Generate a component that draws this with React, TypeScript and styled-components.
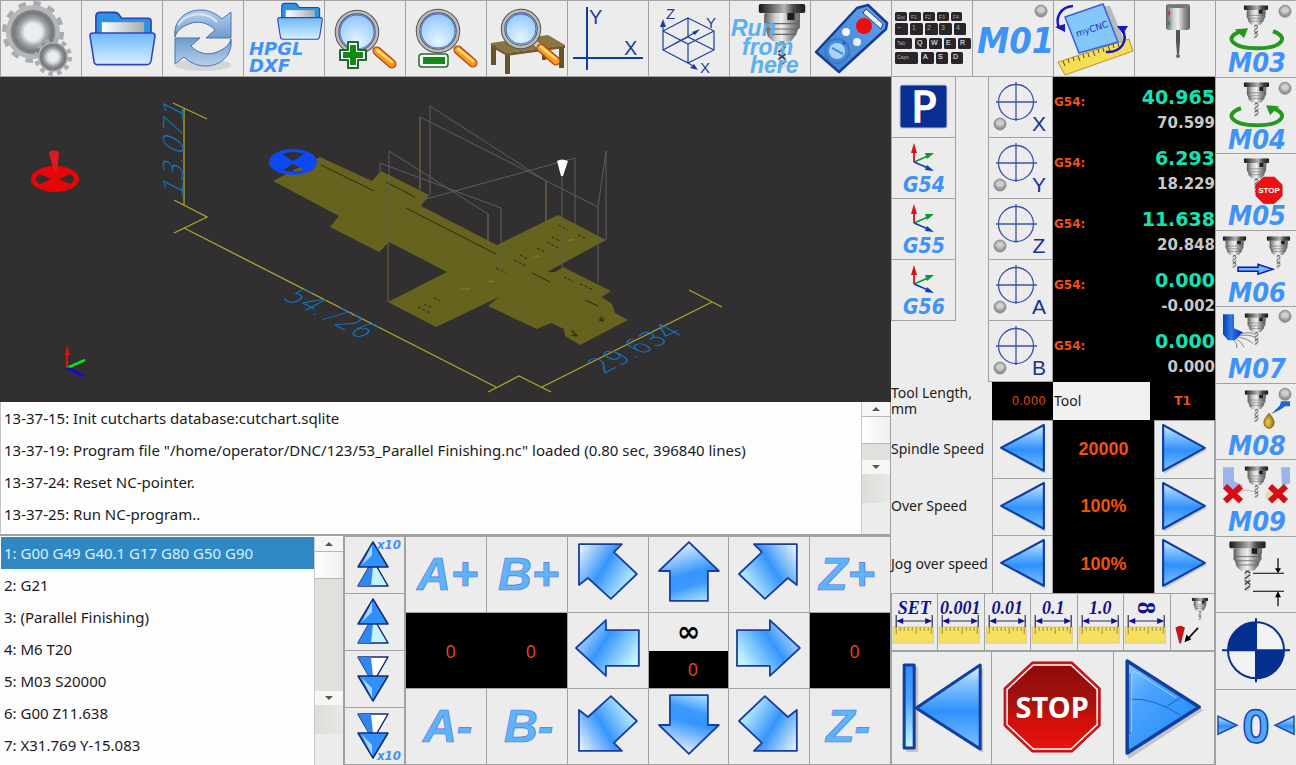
import React from "react";
import styled, { createGlobalStyle, css } from "styled-components";

const sans = '"Noto Sans", "Liberation Sans", sans-serif';
const dejavu = '"DejaVu Sans", Verdana, sans-serif';
const condensed = '"DejaVu Sans Condensed", "DejaVu Sans", sans-serif';
const liberation = '"Liberation Sans", Arial, sans-serif';
const serif = '"Liberation Serif", "Times New Roman", serif';

const color = {
  face: "#ececec",
  line: "#a2a2a2",
  view: "#312f30",
  orange: "#f4510b",
  dimOrange: "#d9480c",
  teal: "#14e2b2",
  silver: "#c8c8c8",
  navy: "#17338f",
  label: "#3f92f8",
};

const GlobalStyle = createGlobalStyle`
  * { box-sizing: border-box; }
  body { margin: 0; background: ${color.face}; font-family: ${sans}; color: #1b1b1b; }
  button { font: inherit; }
`;

/* ---------- layout ---------- */

const Screen = styled.div`
  display: grid;
  grid-template-columns: minmax(0, 15fr) minmax(0, 1fr);
  grid-template-rows: minmax(0, 1fr);
  height: 100vh;
  min-height: 700px;
  overflow: hidden;
`;

const Main = styled.main`
  display: grid;
  grid-template-rows: minmax(0, 77fr) minmax(0, 688fr);
`;

const Toolbar = styled.nav`
  display: grid;
  grid-template-columns: repeat(15, minmax(0, 1fr));
  grid-template-rows: minmax(0, 1fr);
  gap: 1px;
  padding: 1px 0 1px 1px;
  background: ${color.line};
`;

const MCodes = styled.nav`
  display: grid;
  grid-template-rows: repeat(10, minmax(0, 1fr));
  gap: 1px;
  padding: 1px 0 0 1px;
  background: ${color.line};
`;

const Body = styled.div`
  display: grid;
  grid-template-columns: minmax(0, 11fr) minmax(0, 4fr);
  grid-template-rows: minmax(0, 1fr);
`;

const Left = styled.div`
  display: grid;
  grid-template-rows: minmax(0, 325fr) minmax(0, 134fr) minmax(0, 229fr);
`;

const Right = styled.div`
  display: grid;
  grid-template-rows: minmax(0, 305fr) minmax(0, 38fr) minmax(0, 173fr) minmax(0, 58fr) minmax(0, 114fr);
`;

const Key = styled.button`
  display: block;
  min-width: 0;
  min-height: 0;
  padding: 0;
  border: 0;
  background: ${color.face};
  cursor: pointer;
`;

const Drawing = styled.svg`
  display: block;
  width: 100%;
  height: 100%;
`;

/* ---------- log and program ---------- */

const LogPanel = styled.section`
  display: flex;
  border: 1px solid ${color.line};
  border-top: 0;
  border-left-color: #c4c4c4;
  border-bottom-width: 2px;
  background: #fdfdfd;
  overflow: hidden;
`;

const Lines = styled.ul`
  flex: 1;
  min-width: 0;
  margin: 0;
  padding: 0;
  list-style: none;
  overflow: hidden;
`;

const Line = styled.li<{ $current?: boolean }>`
  height: 32px;
  padding-left: 3px;
  font-size: 15px;
  line-height: 32px;
  white-space: nowrap;
  ${(p) =>
    p.$current &&
    css`
      background: #3088c2;
      color: #d3f1ff;
    `}
`;

const Bar = styled.div`
  display: flex;
  flex-direction: column;
  width: 29px;
  border-left: 1px solid #c9c9c9;
  background: ${color.face};
`;

const BarArrow = styled.button<{ $down?: boolean }>`
  flex: none;
  height: 14px;
  padding: 0 0 0 10px;
  border: 0;
  background: #f7f6f5;
  &::before {
    content: "";
    display: block;
    width: 0;
    border: 4px solid transparent;
    ${(p) => (p.$down ? "border-top: 4px solid #555; border-bottom: 0;" : "border-bottom: 4px solid #555; border-top: 0;")}
  }
`;

const Thumb = styled.div`
  flex: none;
  height: 28px;
  border: solid #b9b7b4;
  border-width: 1px 0;
  background: linear-gradient(90deg, #fefefe, #f1efed);
`;

const Track = styled.div`
  flex: 1;
  background: #e0e0dd;
`;

const BarFoot = styled.div`
  flex: none;
  height: 29px;
  margin-bottom: 31px;
  background: linear-gradient(90deg, #dcdcd9, #e8e8e6);
`;

const Bottom = styled.div`
  display: grid;
  grid-template-columns: minmax(0, 344fr) minmax(0, 61fr) minmax(0, 486fr);
  grid-template-rows: minmax(0, 1fr);
`;

const Program = styled.section`
  display: flex;
  min-height: 0;
  padding: 1px 0 0 1px;
  background: #fdfdfd;
  border-right: 1px solid ${color.line};
  overflow: hidden;
`;

const Pager = styled.div`
  display: grid;
  grid-template-rows: repeat(4, minmax(0, 1fr));
  gap: 1px;
  padding: 1px;
  background: ${color.line};
`;

/* ---------- jog pad ---------- */

const JogPad = styled.div`
  display: grid;
  grid-template-columns: repeat(6, minmax(0, 1fr));
  grid-template-rows: repeat(3, minmax(0, 1fr));
  gap: 1px;
  padding: 1px;
  background: ${color.line};
`;

const JogReadout = styled.output<{ $span?: number }>`
  display: grid;
  grid-template-columns: repeat(${(p) => p.$span ?? 1}, 1fr);
  grid-column: span ${(p) => p.$span ?? 1};
  align-items: center;
  background: #000;
  color: ${color.dimOrange};
  font-family: ${sans};
  font-size: 18px;
  line-height: 24px;
  text-align: center;
  span {
    padding-left: 9px;
  }
`;

const JogStep = styled.div`
  display: grid;
  grid-template-rows: repeat(2, minmax(0, 1fr));
`;

const StepValue = styled.div`
  display: grid;
  place-items: center;
  background: ${color.face};
  color: #000;
  font-family: ${dejavu};
  font-size: 28px;
  font-weight: 700;
  line-height: 36px;
`;

/* ---------- axes ---------- */

const Axes = styled.section`
  display: grid;
  grid-template-columns: minmax(0, 65fr) minmax(0, 32fr) minmax(0, 65fr) minmax(0, 162fr);
  grid-template-rows: minmax(0, 1fr);
`;

const KeyColumn = styled.div`
  display: grid;
  grid-template-rows: repeat(5, minmax(0, 1fr));
`;

const FramedKey = styled(Key)`
  border: 1px solid ${color.line};
  border-top-width: 0;
`;

const Readouts = styled.div`
  display: grid;
  grid-template-rows: repeat(5, minmax(0, 1fr));
  background: #000;
`;

const AxisRow = styled.div`
  display: flex;
  justify-content: space-between;
  align-items: flex-start;
  padding-left: 1px;
`;

const Offset = styled.span`
  padding-top: 13px;
  color: ${color.orange};
  font-family: ${dejavu};
  font-size: 12px;
  font-weight: 700;
  line-height: 24px;
`;

const Values = styled.output`
  display: grid;
  padding-top: 8px;
  font-family: ${dejavu};
  font-weight: 700;
  text-align: right;
`;

const Work = styled.span`
  color: ${color.teal};
  font-size: 19px;
  line-height: 24px;
`;

const Machine = styled.span`
  color: ${color.silver};
  font-size: 15px;
  line-height: 28px;
`;

/* ---------- tool and speeds ---------- */

const ToolRow = styled.section`
  display: grid;
  grid-template-columns: minmax(0, 101fr) minmax(0, 61fr) minmax(0, 97fr) minmax(0, 65fr);
  grid-template-rows: minmax(0, 1fr);
`;

const Caption = styled.span`
  display: flex;
  align-items: center;
  font-family: ${sans};
  font-size: 14px;
  line-height: 16px;
`;

const ToolCaption = styled(Caption)`
  padding-left: 1px;
  background: #f1f1f1;
`;

const Small = styled.output<{ $bold?: boolean }>`
  display: flex;
  align-items: center;
  justify-content: ${(p) => (p.$bold ? "center" : "flex-end")};
  padding-right: ${(p) => (p.$bold ? 0 : 7)}px;
  background: #000;
  color: ${(p) => (p.$bold ? color.orange : color.dimOrange)};
  font-family: ${dejavu};
  font-size: 12px;
  font-weight: ${(p) => (p.$bold ? 700 : 400)};
  line-height: 16px;
`;

const Speeds = styled.section`
  display: grid;
  grid-template-rows: repeat(3, minmax(0, 1fr));
`;

const SpeedRow = styled.div`
  display: grid;
  grid-template-columns: minmax(0, 101fr) minmax(0, 61fr) minmax(0, 101fr) minmax(0, 61fr);
  grid-template-rows: minmax(0, 1fr);
`;

const SpeedKey = styled(Key)`
  border: 1px solid ${color.line};
  border-bottom-width: 0;
`;

const SpeedValue = styled.output`
  display: grid;
  place-items: center;
  background: #000;
  color: ${color.orange};
  font-family: ${liberation};
  font-size: 18px;
  font-weight: 700;
  line-height: 24px;
`;

const Steps = styled.section`
  display: grid;
  grid-template-columns: repeat(6, minmax(0, 46fr)) minmax(0, 44fr);
  grid-template-rows: minmax(0, 1fr);
  gap: 1px;
  padding: 1px;
  background: ${color.line};
`;

const Run = styled.section`
  display: grid;
  grid-template-columns: minmax(0, 100fr) minmax(0, 121fr) minmax(0, 101fr);
  grid-template-rows: minmax(0, 1fr);
  gap: 1px;
  padding: 1px;
  background: ${color.line};
`;

/* ---------- shared drawings ---------- */

const SharedDefs = styled.svg`
  position: absolute;
  width: 0;
  height: 0;
`;

function Defs() {
  return (
    <SharedDefs aria-hidden="true">
      <defs>
        <linearGradient id="metal" x1="0" x2="1" y1="0" y2="0">
          <stop offset="0" stopColor="#5b5b5b" />
          <stop offset=".3" stopColor="#cfcfcf" />
          <stop offset=".5" stopColor="#efefef" />
          <stop offset=".75" stopColor="#979797" />
          <stop offset="1" stopColor="#5e5e5e" />
        </linearGradient>
        <linearGradient id="darkMetal" x1="0" x2="1" y1="0" y2="0">
          <stop offset="0" stopColor="#161616" />
          <stop offset=".3" stopColor="#6d6d6d" />
          <stop offset=".55" stopColor="#b5b5b5" />
          <stop offset=".75" stopColor="#4a4a4a" />
          <stop offset="1" stopColor="#1c1c1c" />
        </linearGradient>
        <linearGradient id="arrow" x1="0" x2="1" y1="0" y2=".6">
          <stop offset="0" stopColor="#f3faff" />
          <stop offset=".5" stopColor="#3695fb" />
          <stop offset="1" stopColor="#c3f4ff" />
        </linearGradient>
        <linearGradient id="upArrow" x1=".3" x2=".6" y1="0" y2="1">
          <stop offset="0" stopColor="#f3faff" />
          <stop offset=".55" stopColor="#3695fb" />
          <stop offset=".75" stopColor="#3d9afc" />
          <stop offset="1" stopColor="#9fd8ff" />
        </linearGradient>
        <linearGradient id="tri" x1="0" x2="0" y1="0" y2="1">
          <stop offset="0" stopColor="#e4f4ff" />
          <stop offset=".2" stopColor="#8cc8ff" />
          <stop offset=".55" stopColor="#2f90fc" />
          <stop offset="1" stopColor="#7cc2ff" />
        </linearGradient>
        <linearGradient id="play" x1="0" x2="1" y1="0" y2="1">
          <stop offset="0" stopColor="#8fcbff" />
          <stop offset=".3" stopColor="#4ba4fd" />
          <stop offset=".7" stopColor="#3192fb" />
          <stop offset="1" stopColor="#8fd0ff" />
        </linearGradient>
        <linearGradient id="bar" x1="0" x2="0" y1="0" y2="1">
          <stop offset="0" stopColor="#2f90fc" />
          <stop offset=".4" stopColor="#4aa2fc" />
          <stop offset="1" stopColor="#c9f6ff" />
        </linearGradient>
        <linearGradient id="folder" x1="0" x2="0" y1="0" y2="1">
          <stop offset="0" stopColor="#6db9fa" />
          <stop offset="1" stopColor="#d8efff" />
        </linearGradient>
        <linearGradient id="paper" x1="0" x2="1" y1="0" y2="0">
          <stop offset="0" stopColor="#fff" />
          <stop offset="1" stopColor="#a9acb0" />
        </linearGradient>
        <linearGradient id="steel" x1="0" x2="0" y1="0" y2="1">
          <stop offset="0" stopColor="#b8d0ea" />
          <stop offset="1" stopColor="#6f9bcf" />
        </linearGradient>
        <linearGradient id="stopRed" x1="0" x2="0" y1="0" y2="1">
          <stop offset="0" stopColor="#8f0a08" />
          <stop offset=".5" stopColor="#a81410" />
          <stop offset=".6" stopColor="#c90f0b" />
          <stop offset="1" stopColor="#ec120d" />
        </linearGradient>
        <linearGradient id="remote" x1="0" x2="1" y1="1" y2="0">
          <stop offset="0" stopColor="#3f7fd2" />
          <stop offset="1" stopColor="#5fa2ea" />
        </linearGradient>
        <linearGradient id="jet" x1="0" x2="1" y1="0" y2="0">
          <stop offset="0" stopColor="#0a3fb0" />
          <stop offset=".4" stopColor="#2f7be0" />
          <stop offset="1" stopColor="#0b1ec8" />
        </linearGradient>
        <radialGradient id="lens" cx=".5" cy=".75" r=".8">
          <stop offset="0" stopColor="#e6f4ff" />
          <stop offset=".5" stopColor="#b4dafe" />
          <stop offset="1" stopColor="#7fbdf8" />
        </radialGradient>
        <radialGradient id="led" cx=".5" cy=".4" r=".6">
          <stop offset="0" stopColor="#d6d6d6" />
          <stop offset=".6" stopColor="#a9a9a9" />
          <stop offset="1" stopColor="#7d7d7d" />
        </radialGradient>
        <radialGradient id="gearFace" cx=".5" cy=".5" r=".5">
          <stop offset=".45" stopColor="#d5d8da" />
          <stop offset=".6" stopColor="#a4a8ac" />
          <stop offset=".85" stopColor="#757a7f" />
          <stop offset="1" stopColor="#83878b" />
        </radialGradient>
        <radialGradient id="drop" cx=".4" cy=".6" r=".6">
          <stop offset="0" stopColor="#f2d35a" />
          <stop offset="1" stopColor="#8f6c0c" />
        </radialGradient>
        <symbol id="spindle" viewBox="0 0 28 36">
          <path d="M12 20h4v15l-2 1-2-1z" fill="#d4d4d4" />
          <path d="M12 23l4-3M12 27l4-3M12 31l4-3M12 35l4-3M12 20l4 3M12 28l4 3" stroke="#3d3d3d" strokeWidth=".9" />
          <path d="M5 14h18l-1 3-3 4H9l-3-3z" fill="url(#metal)" />
          <rect x="4" y="5" width="20" height="9" rx="1" fill="url(#metal)" />
          <path d="M5 11h18M5 14h18M7 17h15" stroke="#666" strokeWidth=".6" />
          <rect x="1" y="0" width="26" height="5" rx="1" fill="url(#darkMetal)" />
          <rect x="17" y="5" width="7" height="4" fill="#1d1d1d" />
          <rect x="21" y="5" width="3" height="4" fill="#777" />
        </symbol>
        <symbol id="folderIcon" viewBox="0 0 68 56">
          <path d="M7 26V6q0-4 4-4h15q3 0 5 3l2 3h27q3 0 3 3v15z" fill="#2b92dd" stroke="#2b3fb8" strokeWidth="1.6" />
          <rect x="13" y="12" width="43" height="16" fill="url(#paper)" />
          <path d="M1 26q0-3 3-3h60q3 0 3 3l-4 25q-1 4-4 4H9q-4 0-4-4z" fill="url(#folder)" stroke="#2f45c4" strokeWidth="1.6" />
        </symbol>
      </defs>
    </SharedDefs>
  );
}

const Led = ({ x, y }: { x: number; y: number }) => (
  <g>
    <circle cx={x} cy={y} r="6" fill="url(#led)" stroke="#8f8f8f" />
    <ellipse cx={x} cy={y - 1} rx="3.6" ry="2.8" fill="#cfcfcf" />
  </g>
);

const Spindle = ({ x, y, w }: { x: number; y: number; w: number }) => (
  <use href="#spindle" x={x} y={y} width={w} height={(w * 36) / 28} />
);

const Lens = ({ x, y, r }: { x: number; y: number; r: number }) => (
  <g>
    <path d={`M${x + 14} ${y + 14}l6 5`} stroke="#c9c9c9" strokeWidth="5" />
    <path d={`M${x + 20} ${y + 19}l15 13`} stroke="#c43a10" strokeWidth="9" strokeLinecap="round" />
    <path d={`M${x + 20} ${y + 19}l15 13`} stroke="#f79a1e" strokeWidth="6.5" strokeLinecap="round" />
    <path d={`M${x + 20} ${y + 18}l15 12`} stroke="#ffe36c" strokeWidth="2.5" strokeLinecap="round" />
    <circle cx={x} cy={y} r={r} fill="url(#lens)" stroke="#555" strokeWidth="4.5" />
    <circle cx={x} cy={y} r={r} fill="none" stroke="#bcbcbc" strokeWidth="2.5" />
    <circle cx={x} cy={y} r={r - 3} fill="none" stroke="#4a67c8" strokeWidth="1" />
  </g>
);

const Gear = ({ x, y, r, teeth }: { x: number; y: number; r: number; teeth: number }) => {
  const unit = (2 * Math.PI * (r - 3)) / (teeth * 2);
  return (
    <g>
      <circle cx={x} cy={y} r={r - 3} fill="none" stroke="#a9abad" strokeWidth="6" strokeDasharray={`${unit} ${unit}`} />
      <circle cx={x} cy={y} r={r - 4} fill="#b4b6b8" />
      <circle cx={x} cy={y} r={r * 0.72} fill="url(#gearFace)" />
      <circle cx={x} cy={y} r={r * 0.34} fill="#ececec" stroke="#cfd2d4" strokeWidth="2" />
    </g>
  );
};

const Cross = ({ x, y }: { x: number; y: number }) => (
  <path d={`M${x - 8} ${y - 7}L${x + 8} ${y + 8}M${x + 8} ${y - 7}L${x - 8} ${y + 8}`} stroke="#d40d17" strokeWidth="6" />
);

const octagon = (cx: number, cy: number, rx: number, ry: number) => {
  const k = 0.42;
  return [
    [-k, -1], [k, -1], [1, -k], [1, k], [k, 1], [-k, 1], [-1, k], [-1, -k],
  ]
    .map(([a, b]) => `${cx + a * rx},${cy + b * ry}`)
    .join(" ");
};

const CodeText = ({ children, x = 12, y = 71, size = 27 }: { children: string; x?: number; y?: number; size?: number }) => (
  <text x={x} y={y} fill={color.label} fontFamily={condensed} fontSize={size} fontWeight="700" fontStyle="italic">
    {children}
  </text>
);

/* ---------- toolbar ---------- */

const keyRows: { y: number; h: number; keys: [number, number, string][] }[] = [
  { y: 11, h: 9, keys: [[3, 12, "Esc"], [17, 12, "F1"], [31, 12, "F2"], [45, 12, "F3"], [59, 11, "F4"]] },
  { y: 22, h: 12, keys: [[3, 13, "~"], [18, 13, "1"], [33, 13, "2"], [47, 13, "3"], [62, 12, "4"]] },
  { y: 37, h: 11, keys: [[3, 17, "Tab"], [23, 12, "Q"], [37, 13, "W"], [52, 12, "E"], [66, 13, "R"]] },
  { y: 51, h: 12, keys: [[3, 23, "Caps"], [29, 13, "A"], [44, 12, "S"], [59, 12, "D"]] },
];

const runText = { fill: "#59b0f2", fontFamily: liberation, fontSize: 23, fontWeight: 700, fontStyle: "italic" } as const;
const axisText = { fill: "#1d3f9c", fontFamily: liberation, fontSize: 20 } as const;

const tools: [string, React.ReactNode][] = [
  ["Settings", <><Gear x={32} y={31} r={31} teeth={12} /><Gear x={52} y={56} r={19} teeth={12} /></>],
  ["Open file", <use href="#folderIcon" x="7" y="9" width="67" height="56" />],
  ["Reload", <>
    <ellipse cx="40" cy="64" rx="28" ry="6" fill="#d3d5d8" />
    <path d="M12 36C10 20 22 9 38 9C46 9 54 13 59 18L68 11V37H43L52 29C46 22 35 19 26 23C18 26 14 30 12 36Z" fill="url(#steel)" stroke="#4a74ac" />
    <path d="M12 36C10 20 22 9 38 9C46 9 54 13 59 18L68 11V37H43L52 29C46 22 35 19 26 23C18 26 14 30 12 36Z" fill="url(#steel)" stroke="#4a74ac" transform="rotate(180 40 37)" />
    <path d="M15 24C23 12 42 9 54 21" fill="none" stroke="#dbe8f6" strokeWidth="2" />
  </>],
  ["Open HPGL or DXF", <>
    <use href="#folderIcon" x="33" y="1" width="46" height="38" />
    <g fill={color.label} fontFamily={dejavu} fontSize="18" fontWeight="700" fontStyle="italic">
      <text x="5" y="54">HPGL</text><text x="5" y="71">DXF</text>
    </g>
  </>],
  ["Zoom in", <>
    <Lens x={32} y={31} r={20} />
    <path d="M23 41h10v8h8v10h-8v8H23v-8h-8V49h8z" fill="#fff" stroke="#1d6b2a" strokeWidth="2" strokeLinejoin="round" />
    <path d="M25 44h6v7h7v6h-7v7h-6v-7h-7v-6h7z" fill="#128a14" />
  </>],
  ["Zoom out", <>
    <Lens x={32} y={30} r={20} />
    <rect x="13" y="53" width="29" height="13" rx="3" fill="#fff" stroke="#1d6b2a" strokeWidth="1.5" />
    <rect x="17" y="56" width="22" height="7" fill="#128a14" />
  </>],
  ["Zoom to table", <>
    <path d="M55 40h4v19h-4zM4 44h5v20H4zM72 46h5v21h-5zM18 52h5v21h-5z" fill="#645329" />
    <path d="M4 42l57-8 17 10-58 8z" fill="#8a7540" /><path d="M4 42l16 10 58-8v3l-58 8-16-9z" fill="#6f5c30" />
    <Lens x={34} y={28} r={18} />
  </>],
  ["Top view", <>
    <path d="M19 6V69M5 57H75" stroke="#0d3fa3" strokeWidth="2" />
    <text {...axisText} x="21" y="23">Y</text><text {...axisText} x="56" y="54">X</text>
  </>],
  ["3D view", <>
    <path d="M39 17L65 30V49L39 62L14 49V30ZM14 30L39 43L65 30M14 49L39 36L65 49M39 17V36M39 43V62M14 49L47 31M14 30V22M39 62L46 66" fill="none" stroke="#1d3f9c" strokeWidth="1.2" />
    <path d="M11 26l3-8 3 8zM43 31l8-3-5 6zM49 69l-8-2 4-4z" fill="#1d3f9c" />
    <g fill="#1d3f9c" fontFamily={liberation} fontSize="15"><text x="17" y="18">Z</text><text x="57" y="27">Y</text><text x="51" y="72">X</text></g>
  </>],
  ["Run from here", <>
    <Spindle x={27} y={3} w={50} />
    <text {...runText} x="1" y="35">Run</text><text {...runText} x="12" y="54">from</text><text {...runText} x="20" y="72">here</text>
  </>],
  ["Remote control", <>
    <path d="M5 51L46 7L57 4L76 22L75 28L28 71Z" fill="url(#remote)" stroke="#163d94" strokeWidth="2.5" strokeLinejoin="round" />
    <path d="M55 8L72 23L70 28L52 12Z" fill="#f2f2f2" stroke="#163d94" />
    <circle cx="53" cy="25" r="8" fill="#f30b0b" /><circle cx="35" cy="31" r="4" fill="#f3f8ff" /><circle cx="46" cy="41" r="4" fill="#e3efff" />
    <circle cx="26" cy="50" r="12" fill="none" stroke="#3b79cb" strokeWidth="2" />
    <circle cx="26" cy="50" r="8" fill="#a8d4fb" /><path d="M21 47l11 6" stroke="#4b8ad8" strokeWidth="2" /><circle cx="33" cy="42" r="1.5" fill="#1b56b0" />
  </>],
  ["Keyboard", <>
    {keyRows.map((row) => row.keys.map(([x, w, t]) => (
      <g key={t}>
        <rect x={x} y={row.y} width={w} height={row.h} rx="1.5" fill="#29252a" />
        <text x={x + 2} y={row.y + 7} fill={t.length === 1 && t > "@" && t < "Z" ? "#fff" : "#a9a9a9"} fontFamily={liberation} fontSize={t.length === 1 ? 7 : 5}>{t}</text>
      </g>
    )))}
  </>],
  ["M01", <><CodeText x={4} y={52} size={36}>M01</CodeText><Led x={68} y={10} /></>],
  ["Rotate coordinates", <>
    <path d="M50 5l6 0 14 34-6 3z" fill="#b9b9b9" />
    <path d="M4 61L75 38L79 50L11 74Z" fill="#f6dc57" stroke="#b8962a" />
    <path d="M9 60l2 5M14 58l1 4M19 56l1 4M24 55l2 5M29 53l1 4M34 52l1 4M39 50l2 5M44 48l1 4M49 47l1 4M54 45l2 5M59 43l1 4M64 42l1 4" stroke="#5a4a10" />
    <path d="M11 16L49 3L64 41L25 52Z" fill="#84c8fb" stroke="#3b5de6" strokeWidth="1.5" />
    <text x="23" y="36" transform="rotate(-18 23 36)" fill="#1a30b8" fontFamily={dejavu} fontSize="9">myCNC</text>
    <path d="M19 5C6 6 1 17 5 27M52 51C67 52 75 40 68 28" fill="none" stroke="#1416c8" strokeWidth="2.5" />
    <path d="M1 26l10 5 0-8zM63 25l11 0-5 8z" fill="#1416c8" />
  </>],
  ["Probe", <>
    <path d="M41 29h4v12l-1 12h-2l-1-12z" fill="#555" /><circle cx="43" cy="55" r="2" fill="#666" />
    <rect x="31" y="3" width="24" height="26" rx="3" fill="url(#metal)" /><ellipse cx="43" cy="5" rx="12" ry="2" fill="#777" />
    <path d="M32 12l3-3v6z" fill="#e22" /><path d="M32 22l3-2v5z" fill="#1a9a4a" />
  </>],
];

/* ---------- M codes ---------- */

const mcodes: [string, React.ReactNode][] = [
  ["M03", <>
    <path d="M25 30C7 36 16 47 41 47C66 47 74 36 57 30" fill="none" stroke="#23991d" strokeWidth="4" />
    <path d="M19 28l13-1-4 10z" fill="#23991d" /><Spindle x={27} y={4} w={26} /><Led x={69} y={10} /><CodeText>M03</CodeText>
  </>],
  ["M04", <>
    <path d="M25 30C7 36 16 47 41 47C66 47 74 36 57 30" fill="none" stroke="#23991d" strokeWidth="4" />
    <path d="M50 27l13 1-9 9z" fill="#23991d" /><Spindle x={27} y={4} w={27} /><Led x={69} y={10} /><CodeText>M04</CodeText>
  </>],
  ["M05", <>
    <Spindle x={27} y={4} w={27} /><polygon points={octagon(53, 36, 13, 13)} fill="#f00f14" stroke="#c40d10" />
    <text x="53" y="39" fill="#fff" fontFamily={liberation} fontSize="8" fontWeight="700" textAnchor="middle">STOP</text><CodeText>M05</CodeText>
  </>],
  ["M06", <>
    <Spindle x={6} y={5} w={25} /><Spindle x={50} y={5} w={25} />
    <path d="M22 36h20v-3l15 5-15 5v-3H22z" fill="#6db9fa" stroke="#0d14b8" strokeWidth="1.5" /><CodeText>M06</CodeText>
  </>],
  ["M07", <>
    <path d="M7 7h11v14l9 4-8 8H12l-5-6z" fill="url(#jet)" />
    <path d="M24 28q10-1 16 2M23 30q8 1 14 6M21 32q5 3 7 8M18 33q3 3 3 8M24 27q9-3 15 0" fill="none" stroke="#888" />
    <Spindle x={28} y={6} w={25} /><Led x={69} y={9} /><CodeText>M07</CodeText>
  </>],
  ["M08", <>
    <Spindle x={28} y={6} w={25} /><path d="M55 30l9-9 1-4h9v5h-5l-4 3z" fill="#1b66d8" />
    <path d="M53 29q6 7 5 10a5 5 0 0 1-10 0q-1-3 5-10z" fill="url(#drop)" stroke="#8f6c0c" /><Led x={69} y={10} /><CodeText>M08</CodeText>
  </>],
  ["M09", <>
    <path d="M7 7h11v14l9 4-8 8H12l-5-6zM65 7h9v16l-8 3z" fill="#9db4ea" /><circle cx="54" cy="36" r="5" fill="#e6d9ae" />
    <path d="M24 30q10-1 16 2" fill="none" stroke="#bbb" /><Spindle x={28} y={6} w={25} /><Cross x={17} y={33} /><Cross x={62} y={33} /><CodeText>M09</CodeText>
  </>],
  ["Measure tool", <>
    <Spindle x={12} y={4} w={39} />
    <path d="M37 36H68M37 54H68M62 21V34M62 56V69" stroke="#000" strokeWidth="1.2" /><path d="M59 31h6l-3 5zM59 60h6l-3-6z" />
  </>],
  ["Go to zero", <>
    <circle cx="40" cy="37" r="28" fill="#f2f2f2" stroke="#0a2f8f" strokeWidth="2" />
    <path d="M40 37V9A28 28 0 0 0 12 37ZM40 37V65A28 28 0 0 0 68 37Z" fill="#06308f" /><path d="M40 5V69M6 37H74" stroke="#06308f" strokeWidth="2" />
  </>],
  ["Set zero", <>
    <text x="40" y="53" fill="#4ea8ff" stroke="#1d3fa8" strokeWidth="1.5" fontFamily={sans} fontSize="47" fontWeight="700" textAnchor="middle">0</text>
    <path d="M2 26L21 35L2 44ZM78 26L59 35L78 44Z" fill="url(#tri)" stroke="#1d4fa8" strokeWidth="1.5" />
  </>],
];

/* ---------- 3D view ---------- */

const outline =
  "320,157 372,181 381,171 429,195 421,206 497,245 558,215 606,240 547,272 555,272 563,267 611,291 602,297 612,304 615,313 628,320 580,345 565,336 564,329 551,323 537,329 488,306 499,297 436,327 388,302 447,272 389,242 379,252 330,227 339,216 273,181";

const dimText = { fill: "#0f74c2", fontFamily: dejavu, fontWeight: 200 } as const;

function Viewer() {
  return (
    <Drawing viewBox="0 77 891 325" preserveAspectRatio="xMidYMid slice" role="img" aria-label="Tool path">
      <rect y="77" width="891" height="325" fill={color.view} />
      <polygon points={outline} fill="#66631f" />
      <g fill="none" stroke="#2c2a12" strokeWidth="1">
        <path d="M321 165L374 191M406 208L496 254M386 182L415 197M532 273L550 282M585 300L598 306" />
        <path d="M558 225l10 5M578 235l9 4M552 237l10 5M547 242l12 6M520 255l8 4M514 260l12 6M537 248l8 4M496 268l10 5M564 277l10 5M580 284l14 6M418 307l12 6M424 304l7 3M434 298l6 3" strokeDasharray="3 2" />
        <path d="M571 331l6 4m-6 0l7 1m-5-6l3 7M598 318l6 3m-6 1l7-4m-4-2l1 6" />
      </g>
      <path d="M533 258q5-3 8-1M568 241q4-2 7-1M460 289q8 1 10-1M488 282l6-1" fill="none" stroke="#7d781c" strokeWidth="1.500" />
      <g fill="none" stroke="#5e5c60">
        <path d="M420 206V117L598 207V283M430 195V106L546 181V221M389 242V151L488 214V245M380 171V163L501 208V272M426 199L575 158V224M598 207L606 151V240M562 176V267" />
        <path d="M388 242V302M488 214V245M546 181V221M420 188V117" stroke="#69672f" />
      </g>
      <g fill="none" stroke="#aaa92c" strokeWidth="1.3">
        <path d="M184 108V205M173 103L207 119M174 200L207 217L174 233M184 228L496 387M488 392L519 376L551 392M542 387L712 302M689 290L722 307" />
      </g>
      <text {...dimText} fontSize="27" transform="translate(183 200) rotate(-90) skewX(-27)">13.071</text>
      <text {...dimText} fontSize="26" transform="translate(281 298) rotate(27) skewX(-34)">54.726</text>
      <text {...dimText} fontSize="26" transform="translate(604 374) rotate(-27) skewX(34)">29.634</text>
      <ellipse cx="293" cy="162" rx="22" ry="11" fill="#0d49f2" stroke="#0d49f2" strokeWidth="4" />
      <path d="M293 161L282 154Q293 150 304 154ZM293 164L283 170Q293 173 303 170Z" fill={color.view} />
      <path d="M293 170l8-3 2 3q-6 2-10 1z" fill="#66631f" />
      <ellipse cx="55" cy="179" rx="22" ry="11" fill="#e80508" stroke="#e80508" strokeWidth="4" />
      <path d="M51 179L40 184Q32 179 40 174ZM59 179L70 184Q78 179 70 174Z" fill={color.view} />
      <path d="M49 153a5 2.500 0 0 1 10 0l-2 19h-3z" fill="#dd1a24" />
      <path d="M67 368V350" stroke="#e01010" strokeWidth="2" /><path d="M65 355l2-10 3 10z" fill="#e01010" />
      <path d="M67 368L85 360" stroke="#0ee01a" strokeWidth="2.500" /><path d="M67 368L84 376" stroke="#1208d8" strokeWidth="3" />
      <path d="M557 161q5-3 11 0l-5 15h-2z" fill="#fbfbfb" />
    </Drawing>
  );
}

/* ---------- parts ---------- */

const log = [
  "13-37-15: Init cutcharts database:cutchart.sqlite",
  '13-37-19: Program file "/home/operator/DNC/123/53_Parallel Finishing.nc" loaded (0.80 sec, 396840 lines)',
  "13-37-24: Reset NC-pointer.",
  "13-37-25: Run NC-program..",
];

const program = [
  "1: G00 G49 G40.1 G17 G80 G50 G90",
  "2: G21",
  "3: (Parallel Finishing)",
  "4: M6 T20",
  "5: M03 S20000",
  "6: G00 Z11.638",
  "7: X31.769 Y-15.083",
];

const axes = [
  ["X", "40.965", "70.599"],
  ["Y", "6.293", "18.229"],
  ["Z", "11.638", "20.848"],
  ["A", "0.000", "-0.002"],
  ["B", "0.000", "0.000"],
];

const speeds = [
  ["Spindle Speed", "20000"],
  ["Over Speed", "100%"],
  ["Jog over speed", "100%"],
];

function ScrollBar() {
  return (
    <Bar>
      <BarArrow aria-label="Scroll up" />
      <Thumb />
      <Track />
      <BarArrow $down aria-label="Scroll down" />
      <BarFoot />
    </Bar>
  );
}

function IconKey({ name, box = "0 0 80 75", children }: { name: string; box?: string; children: React.ReactNode }) {
  return (
    <Key aria-label={name}>
      <Drawing viewBox={box} fill="none">
        <g fill="#000">{children}</g>
      </Drawing>
    </Key>
  );
}

const diagonal = "M11 7H54L46 15L69 37L43 62L20 41L11 48Z";
const sideways = "M8 35L38 7V17H71V53H38V63Z";
const upward = "M40 5L70 34H59V64H21V34H10Z";

const JogArrow = ({ name, d, flip, fill = "url(#arrow)" }: { name: string; d: string; flip?: string; fill?: string }) => (
  <IconKey name={name}>
    <path d={d} transform={flip} fill={fill} stroke="#173f9b" strokeWidth="1.8" strokeLinejoin="round" />
  </IconKey>
);

const JogLetter = ({ children, x }: { children: string; x: number }) => (
  <IconKey name={`Jog ${children}`}>
    <text x={x} y="53" fill="#5cb4fb" stroke="#5c74d8" strokeWidth=".7" fontFamily={liberation} fontSize="47" fontWeight="700" fontStyle="italic">
      {children}
    </text>
  </IconKey>
);

const PageIcon = ({ name, down, fast }: { name: string; down?: boolean; fast?: boolean }) => (
  <IconKey name={name} box="0 0 59 56">
    <g stroke="#142c6b" strokeWidth="1.5" strokeLinejoin="round" transform={down ? "matrix(1 0 0 -1 0 55)" : undefined}>
      <path d="M28 23L43 49H13Z" fill={down ? "#fff" : "#c3f3ff"} />
      <path d="M13 49L28 23L28 30L26 49Z" fill="#2f88f2" stroke="none" />
      <path d="M28 5L43 30H13Z" fill="#3190fb" />
      <path d="M27 8L27 18L17 28Z" fill="#a9d5ff" stroke="none" />
    </g>
    {fast && (
      <text x="32" y={down ? 52 : 12} fill={color.label} fontFamily={condensed} fontSize="13" fontWeight="700" fontStyle="italic">x10</text>
    )}
  </IconKey>
);

const ruler = (
  <>
    <rect x="1" y="33" width="40" height="16" fill="#f7e05d" stroke="#dcc88a" />
    <path d="M4 33v7M8 33v4M12 33v4M16 33v4M20 33v4M24 33v7M28 33v4M32 33v4M36 33v4M39 33v7" stroke="#a08a3a" />
    <path d="M4 21V33M40 21V33M6 27H38" stroke="#2b2b55" strokeWidth="1.2" />
    <path d="M4 27l7-3v6zM40 27l-7-3v6z" fill="#11118a" />
  </>
);

const stepText = { fill: "#12128c", fontFamily: serif, fontSize: 18, fontWeight: 700, textAnchor: "middle" } as const;

const WorkOffset = ({ name }: { name: string }) => (
  <FramedKey aria-label={name}>
    <Drawing viewBox="0 0 63 60">
      <path d="M22 24V10" stroke="#d80f14" strokeWidth="1.8" /><path d="M19 15l3-10 3 10z" fill="#d80f14" />
      <path d="M22 24L36 18" stroke="#0f9a30" strokeWidth="1.8" /><path d="M33 15l9 0-7 6z" fill="#0f9a30" />
      <path d="M22 24L36 30" stroke="#123fb0" strokeWidth="1.800" /><path d="M35 27l7 6-9-1z" fill="#123fb0" />
      <CodeText x={11} y={54} size={21}>{name}</CodeText>
    </Drawing>
  </FramedKey>
);

const Triangle = ({ name, right }: { name: string; right?: boolean }) => (
  <SpeedKey aria-label={name}>
    <Drawing viewBox="0 0 59 57">
      <path d={right ? "M9 6L52 29L9 53Z" : "M52 6L9 29L52 53Z"} fill="#c4c4c8" />
      <path d={right ? "M8 4L50 27L8 50Z" : "M51 4L8 27L51 50Z"} fill="url(#tri)" stroke="#0f3f9f" strokeWidth="2.2" strokeLinejoin="round" />
    </Drawing>
  </SpeedKey>
);

export default function App() {
  return (
    <Screen>
      <GlobalStyle />
      <Defs />
      <Main>
        <Toolbar aria-label="Tools">
          {tools.map(([name, art]) => (
            <IconKey key={name} name={name}>{art}</IconKey>
          ))}
        </Toolbar>
        <Body>
          <Left>
            <Viewer />
            <LogPanel aria-label="Log">
              <Lines>
                {log.map((l) => <Line key={l}>{l}</Line>)}
              </Lines>
              <ScrollBar />
            </LogPanel>
            <Bottom>
              <Program aria-label="Program">
                <Lines>
                  {program.map((l, i) => <Line key={l} $current={i === 0}>{l}</Line>)}
                </Lines>
                <ScrollBar />
              </Program>
              <Pager>
                <PageIcon name="Back ten lines" fast />
                <PageIcon name="Back one line" />
                <PageIcon name="Forward one line" down />
                <PageIcon name="Forward ten lines" down fast />
              </Pager>
              <JogPad>
                <JogLetter x={11}>A+</JogLetter>
                <JogLetter x={11}>B+</JogLetter>
                <JogArrow name="Jog up left" d={diagonal} />
                <JogArrow name="Jog up" d={upward} fill="url(#upArrow)" />
                <JogArrow name="Jog up right" d={diagonal} flip="matrix(-1 0 0 1 79 0)" />
                <JogLetter x={9}>Z+</JogLetter>
                <JogReadout $span={2}><span>0</span><span>0</span></JogReadout>
                <JogArrow name="Jog left" d={sideways} />
                <JogStep>
                  <StepValue>∞</StepValue>
                  <JogReadout><span>0</span></JogReadout>
                </JogStep>
                <JogArrow name="Jog right" d={sideways} flip="matrix(-1 0 0 1 79 0)" />
                <JogReadout><span>0</span></JogReadout>
                <JogLetter x={17}>A-</JogLetter>
                <JogLetter x={17}>B-</JogLetter>
                <JogArrow name="Jog down left" d={diagonal} flip="matrix(1 0 0 -1 0 69)" />
                <JogArrow name="Jog down" d={upward} flip="matrix(1 0 0 -1 0 70)" fill="url(#upArrow)" />
                <JogArrow name="Jog down right" d={diagonal} flip="matrix(-1 0 0 -1 79 69)" />
                <JogLetter x={16}>Z-</JogLetter>
              </JogPad>
            </Bottom>
          </Left>
          <Right>
            <Axes>
              <KeyColumn>
                <FramedKey aria-label="Park">
                  <Drawing viewBox="0 0 63 60">
                    <rect x="8" y="8" width="47" height="43" rx="2" fill="#0a2f93" stroke="#b9c2dc" />
                    <text x="32" y="45" fill="#fff" stroke="#fff" strokeWidth="1.500" fontFamily={dejavu} fontSize="42" textAnchor="middle">P</text>
                  </Drawing>
                </FramedKey>
                <WorkOffset name="G54" />
                <WorkOffset name="G55" />
                <WorkOffset name="G56" />
              </KeyColumn>
              <span />
              <KeyColumn>
                {axes.map(([axis]) => (
                  <FramedKey key={axis} aria-label={`Zero ${axis}`}>
                    <Drawing viewBox="0 0 63 60">
                      <g fill="none" stroke="#3a54a8" strokeWidth="1.300"><circle cx="27" cy="25" r="17.500" /><path d="M27 5V44M7 25H48" /></g>
                      <Led x={11} y={47} />
                      <text x="50" y="54" fill={color.navy} fontFamily={liberation} fontSize="21" textAnchor="middle">{axis}</text>
                    </Drawing>
                  </FramedKey>
                ))}
              </KeyColumn>
              <Readouts>
                {axes.map(([axis, work, machine]) => (
                  <AxisRow key={axis}>
                    <Offset>G54:</Offset>
                    <Values><Work>{work}</Work><Machine>{machine}</Machine></Values>
                  </AxisRow>
                ))}
              </Readouts>
            </Axes>
            <ToolRow>
              <Caption>Tool Length, mm</Caption>
              <Small>0.000</Small>
              <ToolCaption>Tool</ToolCaption>
              <Small $bold>T1</Small>
            </ToolRow>
            <Speeds>
              {speeds.map(([name, value]) => (
                <SpeedRow key={name}>
                  <Caption>{name}</Caption>
                  <Triangle name={`${name} down`} />
                  <SpeedValue>{value}</SpeedValue>
                  <Triangle name={`${name} up`} right />
                </SpeedRow>
              ))}
            </Speeds>
            <Steps>
              {["SET", "0.001", "0.01", "0.1", "1.0"].map((s) => (
                <IconKey key={s} name={`Step ${s}`} box="0 0 45 56">
                  {ruler}
                  <text {...stepText} x="22" y="20" fontStyle="italic">{s}</text>
                </IconKey>
              ))}
              <IconKey name="Step unlimited" box="0 0 45 56">
                {ruler}
                <text {...stepText} fontSize="25" transform="translate(14 14) rotate(90)">8</text>
              </IconKey>
              <IconKey name="Tool to pointer" box="0 0 45 56">
                <Spindle x={21} y={3} w={18} />
                <path d="M28 34L17 46" stroke="#111" strokeWidth="1.8" /><path d="M14 49l2-8 5 5z" />
                <path d="M5 34q5-3 9 0l-4 16h-1z" fill="#d40d17" stroke="#7d0a0e" strokeWidth=".6" />
              </IconKey>
            </Steps>
            <Run>
              <IconKey name="Rewind" box="0 0 99 112">
                <path d="M14 15h12v85H14zM91 16v85L27 60z" fill="#c4c4c8" />
                <g stroke="#0f3f9f" strokeWidth="3" strokeLinejoin="round">
                  <rect x="12" y="13" width="10" height="83" fill="url(#bar)" /><path d="M88 13V97L24 56Z" fill="url(#tri)" />
                </g>
              </IconKey>
              <IconKey name="Stop" box="0 0 120 112">
                <polygon points={octagon(60, 55, 48, 45)} fill="#d8141a" stroke="#a80d10" />
                <polygon points={octagon(60, 55, 45, 42)} fill="url(#stopRed)" stroke="#fff" strokeWidth="1.5" />
                <text x="60" y="66" fill="#fff" fontFamily={sans} fontSize="29" fontWeight="700" textAnchor="middle">STOP</text>
              </IconKey>
              <IconKey name="Start" box="0 0 100 112">
                <path d="M15 11L87 58L15 105Z" fill="#c4c4c8" stroke="#c4c4c8" strokeWidth="3" strokeLinejoin="round" />
                <path d="M13 9L85 55L13 101Z" fill="url(#play)" stroke="#0f3f9f" strokeWidth="3.500" strokeLinejoin="round" />
                <path d="M16 47Q40 46 66 63M53 54L66 46M16 22V82" fill="none" stroke="#1c62c0" />
                <path d="M17 80V24L20 19L62 46" fill="none" stroke="#a5d6ff" />
              </IconKey>
            </Run>
          </Right>
        </Body>
      </Main>
      <MCodes aria-label="M codes">
        {mcodes.map(([name, art]) => (
          <IconKey key={name} name={name}>{art}</IconKey>
        ))}
      </MCodes>
    </Screen>
  );
}
